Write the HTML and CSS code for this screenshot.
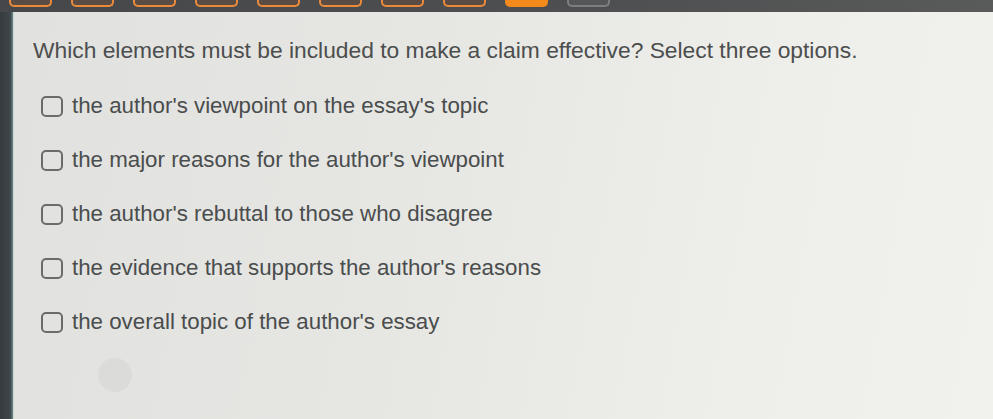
FILE: index.html
```html
<!DOCTYPE html>
<html>
<head>
<meta charset="utf-8">
<link rel="stylesheet" href="styles.css">
</head>
<body>
<div class="screen">
  <div class="topbar">
    <span class="pill"></span>
    <span class="pill"></span>
    <span class="pill"></span>
    <span class="pill"></span>
    <span class="pill"></span>
    <span class="pill"></span>
    <span class="pill"></span>
    <span class="pill"></span>
    <span class="pill pill-active"></span>
    <span class="pill pill-grey"></span>
  </div>
  <div class="body-row">
    <div class="side"></div>
    <div class="panel">
      <p class="question">Which elements must be included to make a claim effective? Select three options.</p>
      <ul class="options">
        <li class="option"><span class="box"></span><span class="label">the author's viewpoint on the essay's topic</span></li>
        <li class="option"><span class="box"></span><span class="label">the major reasons for the author's viewpoint</span></li>
        <li class="option"><span class="box"></span><span class="label">the author's rebuttal to those who disagree</span></li>
        <li class="option"><span class="box"></span><span class="label">the evidence that supports the author's reasons</span></li>
        <li class="option"><span class="box"></span><span class="label">the overall topic of the author's essay</span></li>
      </ul>
      <div class="ghost"></div>
    </div>
  </div>
</div>
</body>
</html>
```

FILE: styles.css
```css
html, body {
  margin: 0;
  padding: 0;
}
body {
  width: 993px;
  height: 419px;
  overflow: hidden;
  background: #3b4043;
  font-family: "Liberation Sans", Arial, sans-serif;
}
.screen {
  display: flex;
  flex-direction: column;
  height: 419px;
}
.topbar {
  height: 12px;
  background: linear-gradient(90deg, #45474a, #4d4f50 60%, #595b5b);
  display: flex;
  align-items: flex-start;
  gap: 19px;
  padding-left: 9px;
  box-sizing: border-box;
}
.pill {
  width: 43px;
  height: 7px;
  box-sizing: border-box;
  border: 2px solid #e88a3a;
  border-top: none;
  border-radius: 0 0 5px 5px;
  background: #5a4c44;
  flex: none;
}
.pill-active {
  background: #f58a1c;
  border-color: #f58a1c;
}
.pill-grey {
  background: #54575a;
  border-color: #7c7e80;
}
.body-row {
  flex: 1;
  display: flex;
}
.side {
  width: 13px;
  background: linear-gradient(90deg, #353b3f, #3f474b 80%, #6d8d88);
  flex: none;
}
.panel {
  flex: 1;
  background: linear-gradient(100deg, #e1e1df 0%, #e6e6e3 40%, #eeeeea 75%, #f1f1ed 100%);
  padding: 24px 0 0 19px;
  box-sizing: border-box;
  border-left: 1px solid #c9d6d2;
}
.question {
  margin: 0;
  font-size: 22.8px;
  color: #4c4e4e;
  line-height: 28px;
}
.options {
  list-style: none;
  margin: 30px 0 0 8px;
  padding: 0;
  display: flex;
  flex-direction: column;
  gap: 30px;
}
.option {
  display: flex;
  align-items: center;
  gap: 9px;
  height: 24px;
}
.box {
  width: 22px;
  height: 21px;
  box-sizing: border-box;
  border: 2px solid #6a6c6c;
  border-radius: 5px;
  flex: none;
}
.label {
  font-size: 22.3px;
  color: #4a4d4d;
}
.ghost {
  width: 34px;
  height: 34px;
  border-radius: 50%;
  background: #dbdbd9;
  margin: 24px 0 0 65px;
}
```
